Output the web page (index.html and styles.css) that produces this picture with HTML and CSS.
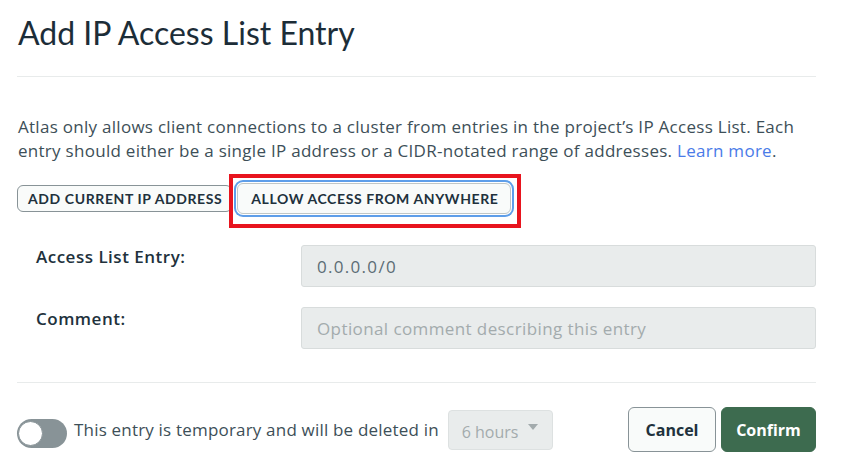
FILE: index.html
```html
<!DOCTYPE html>
<html>
<head>
<meta charset="utf-8">
<link rel="stylesheet" href="styles.css">
</head>
<body>
<div class="modal">
  <h1 class="title">Add IP Access List Entry</h1>
  <div class="rule"></div>
  <p class="desc">Atlas only allows client connections to a cluster from entries in the project’s IP Access List. Each entry should either be a single IP address or a CIDR-notated range of addresses. <a class="link" href="#">Learn more</a>.</p>
  <div class="quick">
    <button class="qbtn">ADD CURRENT IP ADDRESS</button>
    <button class="qbtn qbtn-focus">ALLOW ACCESS FROM ANYWHERE</button>
  </div>
  <div class="form">
    <div class="row">
      <label class="label">Access List Entry:</label>
      <div class="field"><span class="value">0.0.0.0/0</span></div>
    </div>
    <div class="row">
      <label class="label">Comment:</label>
      <div class="field"><span class="placeholder">Optional comment describing this entry</span></div>
    </div>
  </div>
  <div class="rule rule-bottom"></div>
  <div class="footer">
    <div class="temp">
      <span class="toggle"><span class="knob"></span></span>
      <span class="temp-text">This entry is temporary and will be deleted in</span>
      <span class="select"><span class="select-val">6 hours</span><span class="caret"></span></span>
    </div>
    <div class="actions">
      <button class="btn btn-cancel">Cancel</button>
      <button class="btn btn-confirm">Confirm</button>
    </div>
  </div>
</div>
</body>
</html>
```
FILE: styles.css
```css
* { box-sizing: border-box; }
html, body { margin: 0; padding: 0; background: #ffffff; }
body { font-family: "Open Sans", Lato, sans-serif; color: #3d4f58; }

.modal {
  width: 844px;
  padding: 0 28px 0 17px;
}

.title {
  margin: 0;
  padding-top: 13px;
  height: 62px;
  font-family: Lato, sans-serif;
  font-size: 32px;
  font-weight: 400;
  line-height: 40px;
  color: #1c2d38;
  padding-left: 1px;
}

.rule {
  height: 1px;
  background: #e8ebeb;
  margin-top: 14px;
}

.desc {
  margin: 38px 0 0 1px;
  font-size: 17px;
  line-height: 24px;
  color: #3d4f58;
  letter-spacing: 0.28px;
}
.link { color: #4a7be8; text-decoration: none; }

.quick {
  display: flex;
  align-items: center;
  gap: 6px;
  margin-top: 18px;
  height: 34px;
}

.qbtn {
  font-family: Lato, sans-serif;
  font-weight: 700;
  font-size: 14px;
  letter-spacing: 0.6px;
  color: #21313c;
  background: #f9fbfa;
  border: 1px solid #889397;
  border-radius: 6px;
  height: 27px;
  padding: 0 9px 0 10px;
  cursor: pointer;
}

.qbtn-focus {
  position: relative;
  height: 31px;
  margin-left: -1px;
  border-color: #c1c7c6;
  padding: 0 12px 0 13px;
  box-shadow: 0 0 0 1px #ffffff, 0 0 0 3px #5e9ee9;
}
.qbtn-focus::after {
  content: "";
  position: absolute;
  left: -9px;
  top: -10px;
  right: -11px;
  bottom: -15px;
  border: 4px solid #e8141e;
  pointer-events: none;
}

.form {
  margin-top: 30px;
  display: flex;
  flex-direction: column;
  gap: 20px;
}
.row {
  display: flex;
  align-items: flex-start;
}
.label {
  width: 284px;
  padding-left: 19px;
  padding-top: 0;
  font-weight: 600;
  font-size: 17px;
  letter-spacing: 0.5px;
  color: #21313c;
}
.field {
  flex: 1;
  height: 42px;
  background: #e9ecec;
  border: 1px solid #d8dcdc;
  border-radius: 3px;
  padding: 0 15px;
  display: flex;
  align-items: center;
  font-size: 17px;
  letter-spacing: 0.4px;
}
.value { color: #5c6c75; letter-spacing: 1.3px; }
.placeholder { color: #a3abad; }

.rule-bottom { margin-top: 33px; }

.footer {
  display: flex;
  align-items: center;
  justify-content: space-between;
  margin-top: 24px;
}
.temp {
  display: flex;
  align-items: center;
}
.toggle {
  width: 50px;
  height: 29px;
  border-radius: 15px;
  background: #889397;
  position: relative;
  display: inline-block;
  margin-top: 8px;
}
.knob {
  position: absolute;
  left: 1px;
  top: 2px;
  width: 25px;
  height: 25px;
  border-radius: 50%;
  background: #ffffff;
  border: 1px solid #889397;
}
.temp-text {
  margin-left: 7px;
  font-size: 17px;
  letter-spacing: 0.19px;
  color: #3d4f58;
}
.select {
  margin-left: 9px;
  width: 105px;
  height: 40px;
  background: #e9ecec;
  border: 1px solid #dde1e1;
  border-radius: 4px;
  display: flex;
  align-items: center;
  justify-content: space-between;
  padding: 0 14px 0 13px;
}
.select-val { font-size: 16px; color: #a3abad; margin-top: 4px; }
.caret {
  width: 0; height: 0;
  border-left: 5px solid transparent;
  border-right: 5px solid transparent;
  border-top: 6px solid #a3abad;
  align-self: flex-start;
  margin-top: 13px;
}

.actions {
  display: flex;
  gap: 5px;
}
.btn {
  font-family: "Open Sans", sans-serif;
  font-weight: 700;
  font-size: 16px;
  height: 45px;
  border-radius: 6px;
  cursor: pointer;
}
.btn-cancel {
  width: 88px;
  background: #f9fbfa;
  border: 1px solid #889397;
  color: #21313c;
}
.btn-confirm {
  width: 95px;
  background: #3d6b4f;
  border: 1px solid #3d6b4f;
  color: #ffffff;
}
```
